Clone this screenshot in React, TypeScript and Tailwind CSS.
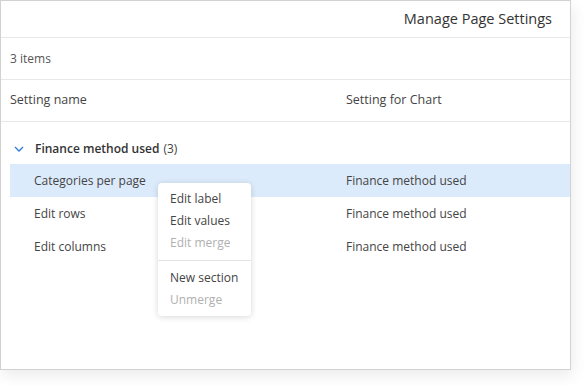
const rows = [
  { name: "Categories per page", value: "Finance method used", selected: true },
  { name: "Edit rows", value: "Finance method used", selected: false },
  { name: "Edit columns", value: "Finance method used", selected: false },
];

const menu = [
  [
    { label: "Edit label", disabled: false },
    { label: "Edit values", disabled: false },
    { label: "Edit merge", disabled: true },
  ],
  [
    { label: "New section", disabled: false },
    { label: "Unmerge", disabled: true },
  ],
];

export default function App() {
  return (
    <div
      className="w-[586px] h-[385px] bg-white text-[12px] text-[#444]"
      style={{ fontFamily: '"Open Sans", "Liberation Sans", sans-serif' }}
    >
      <div className="relative w-[571px] h-[370px] border border-[#d2d2d2] bg-white shadow-[2px_6px_14px_rgba(0,0,0,0.08)]">
        <div className="h-[37px] flex items-center justify-end pr-[18px] border-b border-[#e8e8e8]">
          <h2 className="text-[14.5px] text-[#333]">Manage Page Settings</h2>
        </div>

        <div className="h-[42px] flex items-center px-[9px] border-b border-[#e8e8e8] text-[#555]">
          3 items
        </div>

        <div className="h-[42px] flex items-center px-[9px] border-b border-[#e8e8e8] text-[12.5px] text-[#444]">
          <div className="w-[336px]">Setting name</div>
          <div>Setting for Chart</div>
        </div>

        <div className="pt-[13px] pl-[9px]">
          <div className="h-[29px] flex items-center pb-[1px]">
            <svg width="10" height="6" viewBox="0 0 10 6" className="ml-[4px] mr-[11px]">
              <path d="M1 1 L5 5 L9 1" fill="none" stroke="#2a7bd4" strokeWidth="1.3" />
            </svg>
            <span className="font-semibold text-[#333]">Finance method used</span>
            <span className="ml-1 text-[#444]">(3)</span>
          </div>
          {rows.map((r) => (
            <div
              key={r.name}
              className={`h-[33px] flex items-center ${r.selected ? "bg-[#dcebfb]" : ""}`}
            >
              <div className="w-[336px] pl-[24px]">{r.name}</div>
              <div>{r.value}</div>
            </div>
          ))}
        </div>

        <div className="absolute left-[157px] top-[182px] w-[93px] bg-white rounded-[4px] shadow-[0_1px_6px_rgba(0,0,0,0.16)] py-[5px]">
          {menu.map((group, gi) => (
            <div key={gi} className={gi > 0 ? "border-t border-[#e4e4e4] mt-[6px] pt-[6px]" : ""}>
              {group.map((item) => (
                <div
                  key={item.label}
                  className={`h-[22px] flex items-center px-[12px] whitespace-nowrap ${item.disabled ? "text-[#b0b0b0]" : "text-[#444]"}`}
                >
                  {item.label}
                </div>
              ))}
            </div>
          ))}
        </div>
      </div>
    </div>
  );
}
